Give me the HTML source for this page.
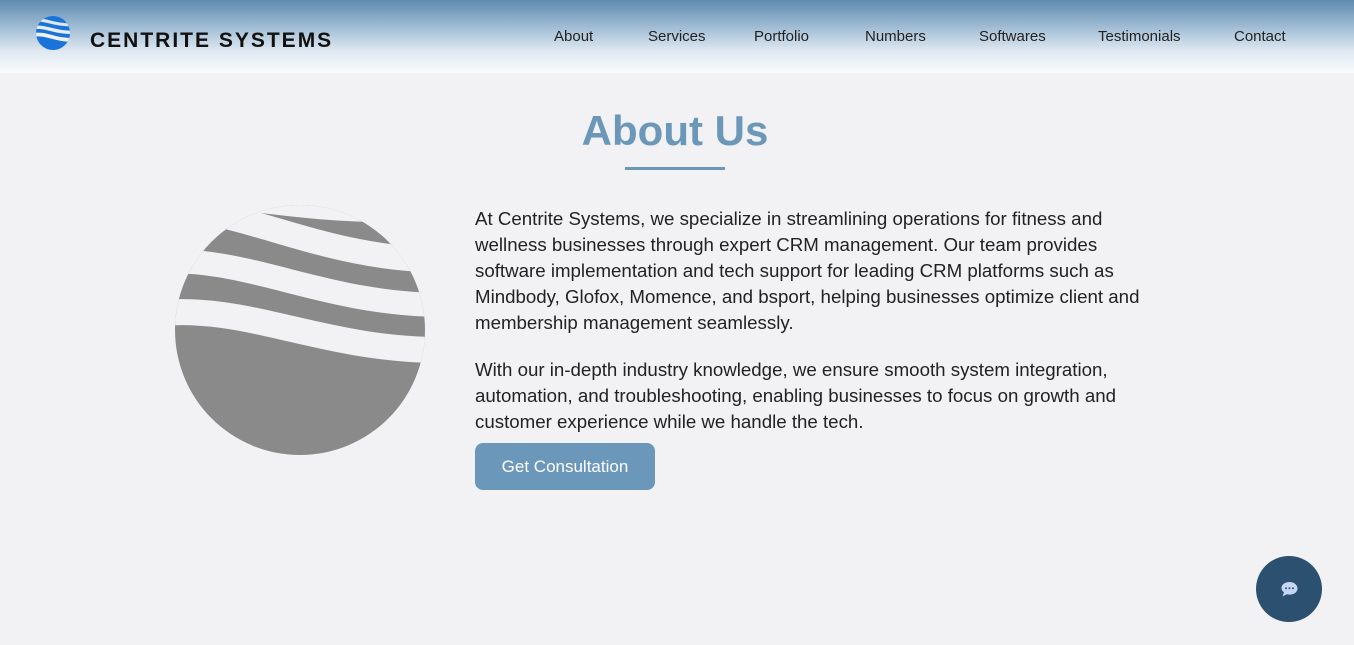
<!DOCTYPE html>
<html><head><meta charset="utf-8"><style>
*{margin:0;padding:0;box-sizing:border-box}
body{width:1354px;height:645px;overflow:hidden;background:#f2f2f4;font-family:"Liberation Sans",sans-serif;position:relative}
header{position:absolute;left:0;top:0;width:1354px;height:73px;background:linear-gradient(#5f8bb0 0%,#9dbad3 35%,#dfe8f1 70%,#fafbfd 100%)}
.brand{position:absolute;left:90px;top:29px;font-size:21px;font-weight:bold;letter-spacing:2px;color:#111}
nav a{position:absolute;top:28px;font-size:15px;color:#222;text-decoration:none}
h1{position:absolute;left:0;width:1350px;text-align:center;top:107px;font-size:42px;color:#6b97b9;font-weight:bold}
.ul{position:absolute;left:625px;top:167px;width:100px;height:3px;background:#6b97b9}
.p{position:absolute;left:475px;font-size:18.7px;line-height:26px;color:#222;white-space:nowrap}
.btn{position:absolute;left:475px;top:443px;width:180px;height:47px;border-radius:8px;background:#6a97ba;color:#fff;font-size:17px;text-align:center;line-height:47px}
.chat{position:absolute;left:1256px;top:556px;width:66px;height:66px;border-radius:50%;background:#2c5070}
</style></head><body>
<header>
<svg style="position:absolute;left:36px;top:16px" width="34" height="34" viewBox="0 0 100 100">
<defs><clipPath id="c1"><circle cx="50" cy="50" r="50"/></clipPath></defs>
<g clip-path="url(#c1)"><rect width="100" height="100" fill="#1a73d9"/>
<path d="M-10 12 C30 8,55 28,110 26" stroke="#dfe8f1" stroke-width="9" fill="none"/>
<path d="M-10 34 C30 28,55 50,110 48" stroke="#e6edf4" stroke-width="10" fill="none"/>
<path d="M-10 56 C30 48,55 72,110 70" stroke="#eef2f7" stroke-width="11" fill="none"/></g></svg>
<div class="brand">CENTRITE SYSTEMS</div>
<nav><a style="left:554px">About</a><a style="left:648px">Services</a><a style="left:754px">Portfolio</a><a style="left:865px">Numbers</a><a style="left:979px">Softwares</a><a style="left:1098px">Testimonials</a><a style="left:1234px">Contact</a></nav>
</header>
<h1>About Us</h1><div class="ul"></div>
<svg style="position:absolute;left:175px;top:205px" width="250" height="250" viewBox="175 205 250 250">
<defs><clipPath id="c2"><circle cx="300" cy="330" r="125"/></clipPath></defs>
<g clip-path="url(#c2)"><rect x="150" y="180" width="300" height="300" fill="#8a8a8a"/>
<path d="M150 196 C230 192,300 220,450 212" stroke="#f2f2f4" stroke-width="18" fill="none"/>
<path d="M150 208 C240 203,320 262,450 260" stroke="#f2f2f4" stroke-width="25" fill="none"/>
<path d="M150 262 C250 254,320 306,450 305" stroke="#f2f2f4" stroke-width="24" fill="none"/>
<path d="M150 314 C250 302,320 352,450 350" stroke="#f2f2f4" stroke-width="26" fill="none"/></g></svg>
<div class="p" style="top:206px">At Centrite Systems, we specialize in streamlining operations for fitness and<br>wellness businesses through expert CRM management. Our team provides<br>software implementation and tech support for leading CRM platforms such as<br>Mindbody, Glofox, Momence, and bsport, helping businesses optimize client and<br>membership management seamlessly.</div>
<div class="p" style="top:357px">With our in-depth industry knowledge, we ensure smooth system integration,<br>automation, and troubleshooting, enabling businesses to focus on growth and<br>customer experience while we handle the tech.</div>
<div class="btn">Get Consultation</div>
<div class="chat"><svg style="position:absolute;left:24px;top:25px" width="19" height="17" viewBox="0 0 19 17"><path d="M9.5 1C4.8 1 1.5 3.6 1.5 7c0 1.8 1 3.3 2.5 4.3L2.5 15.5l4.3-2.2c.9.2 1.8.3 2.7.3 4.7 0 8-2.7 8-6.1S14.2 1 9.5 1z" fill="#c8d6f5"/><circle cx="6" cy="7.2" r="1" fill="#2c5070"/><circle cx="9.5" cy="7.2" r="1" fill="#2c5070"/><circle cx="13" cy="7.2" r="1" fill="#2c5070"/></svg></div>
</body></html>
